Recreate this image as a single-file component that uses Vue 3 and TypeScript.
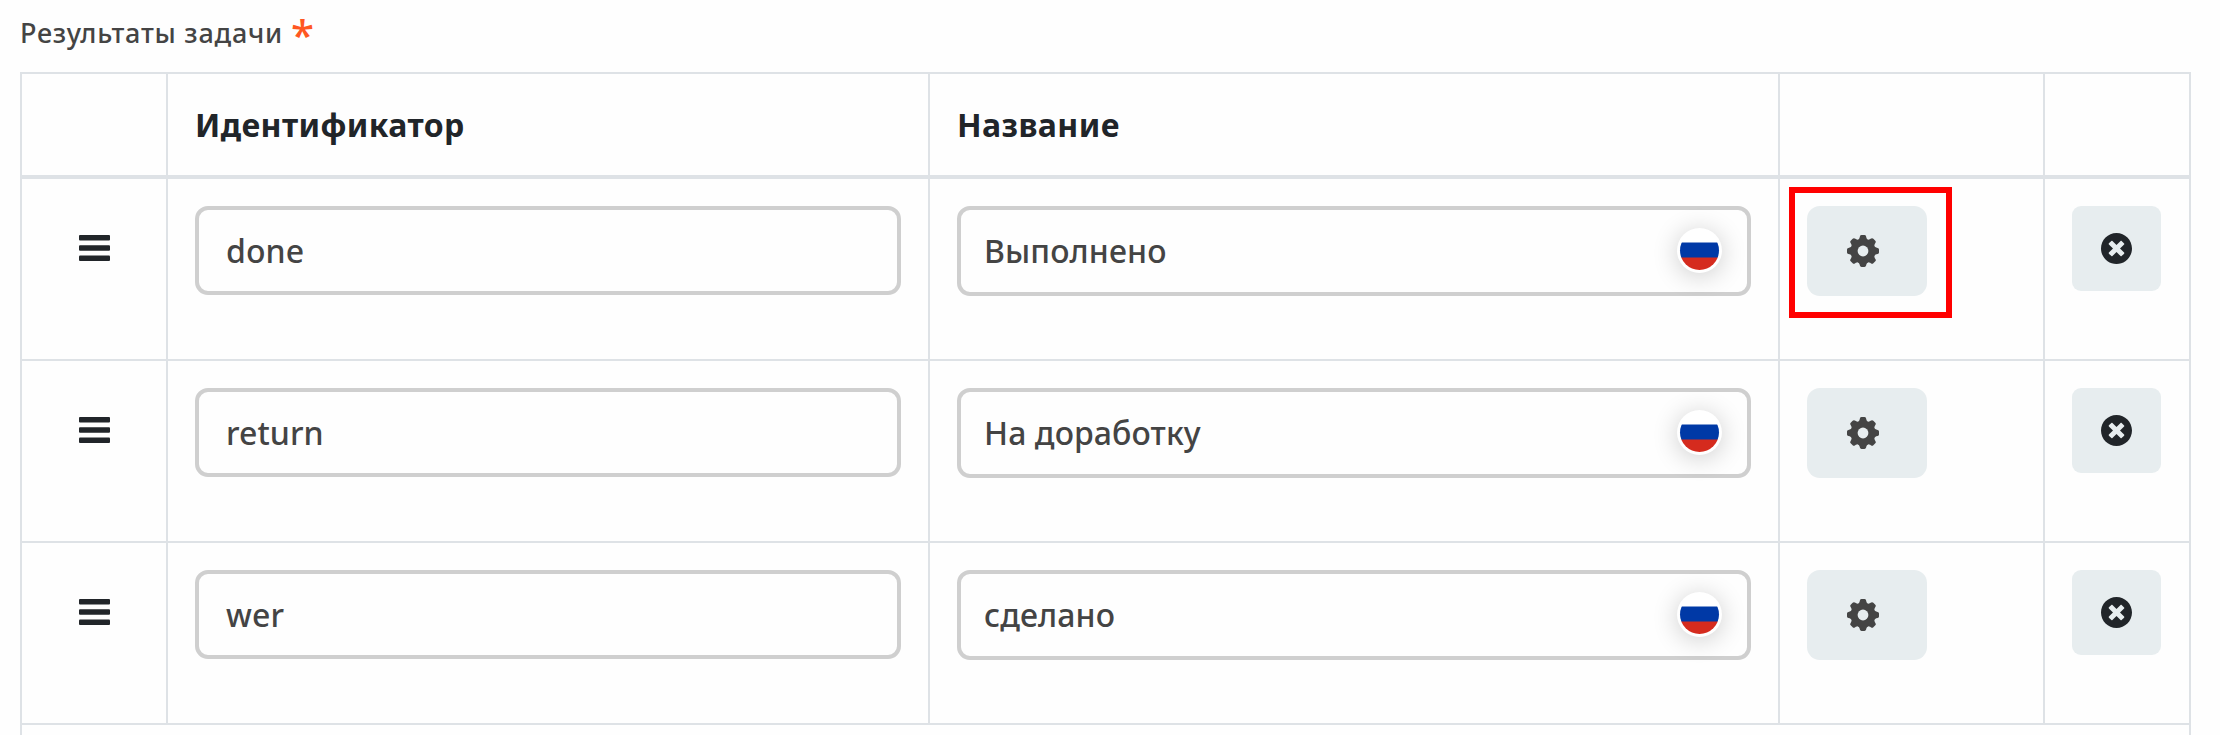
<script setup lang="ts">
interface ResultRow {
  id: string
  title: string
  highlighted: boolean
}

const rows: ResultRow[] = [
  { id: 'done', title: 'Выполнено', highlighted: true },
  { id: 'return', title: 'На доработку', highlighted: false },
  { id: 'wer', title: 'сделано', highlighted: false },
]

const teeth = [0, 45, 90, 135, 180, 225, 270, 315]
</script>

<template>
  <main class="page">
    <div class="label"><span class="label-text">Результаты задачи</span><span class="required">*</span></div>
    <div class="table">
      <div class="row head">
        <div class="cell"></div>
        <div class="cell">Идентификатор</div>
        <div class="cell">Название</div>
        <div class="cell"></div>
        <div class="cell"></div>
      </div>
      <div v-for="row in rows" :key="row.id" class="row">
        <div class="cell handle">
          <svg class="bars" viewBox="0 0 31 26">
            <rect y="0" width="31" height="5.6" rx="1" />
            <rect y="10.2" width="31" height="5.6" rx="1" />
            <rect y="20.5" width="31" height="5.5" rx="1" />
          </svg>
        </div>
        <div class="cell"><div class="field ident"><span class="value">{{ row.id }}</span></div></div>
        <div class="cell">
          <div class="field title">
            <span class="value">{{ row.title }}</span>
            <span class="flag"><span class="stripes"></span></span>
          </div>
        </div>
        <div class="cell settings">
          <button class="btn gear-btn" type="button">
            <svg class="gear" viewBox="-16 -16 32 32">
              <mask id="gear-hole">
                <rect x="-16" y="-16" width="32" height="32" fill="#fff" />
                <circle r="5.4" fill="#000" />
              </mask>
              <g mask="url(#gear-hole)">
                <circle r="12.3" />
                <path
                  v-for="angle in teeth"
                  :key="angle"
                  :transform="`rotate(${angle})`"
                  d="M-6-10C-4.200-11.700-3.400-12.600-3.100-14.600Q-2.800-16-1.400-16H1.400Q2.800-16 3.100-14.600C3.400-12.600 4.200-11.700 6-10Z"
                />
              </g>
            </svg>
          </button>
          <div v-if="row.highlighted" class="highlight"></div>
        </div>
        <div class="cell">
          <button class="btn remove-btn" type="button">
            <svg class="remove" viewBox="8 8 496 496">
              <path d="M256 8C119 8 8 119 8 256s111 248 248 248 248-111 248-248S393 8 256 8zm121.600 313.100c4.700 4.700 4.700 12.300 0 17L338 377.600c-4.700 4.700-12.300 4.700-17 0L256 312l-65.100 65.600c-4.700 4.700-12.300 4.700-17 0L134.400 338c-4.700-4.700-4.700-12.300 0-17l65.600-65-65.600-65.100c-4.700-4.700-4.700-12.300 0-17l39.600-39.600c4.700-4.700 12.300-4.700 17 0l65 65.700 65.100-65.600c4.700-4.700 12.300-4.700 17 0l39.600 39.600c4.700 4.700 4.700 12.300 0 17L312 256l65.600 65.100z" />
            </svg>
          </button>
        </div>
      </div>
      <div class="footer"></div>
    </div>
  </main>
</template>

<style>
body {
  margin: 0;
  background: #fefefe;
}
</style>

<style scoped>
.page {
  box-sizing: border-box;
  width: 2220px;
  height: 735px;
  overflow: hidden;
  padding-left: 20px;
  background: #fefefe;
  color: #212529;
  font-family: 'Noto Sans', 'Open Sans', sans-serif;
}
.label {
  display: flex;
  height: 72px;
  color: #444;
  font-size: 27px;
  font-weight: 500;
  letter-spacing: 0.75px;
  line-height: 66px;
}
.required {
  margin-left: 8px;
  color: #ff5722;
  font-size: 42px;
  line-height: 69px;
}
.table {
  box-sizing: border-box;
  width: 2171px;
  border: 2px solid #dee2e6;
}
.row {
  display: grid;
  grid-template-columns: 144px 762px 850px 265px 146px;
  height: 180px;
  border-bottom: 2px solid #dee2e6;
}
.head {
  height: 101px;
  border-bottom-width: 4px;
  font-size: 32px;
  font-weight: 700;
  letter-spacing: 0.4px;
  line-height: 101px;
}
.cell {
  box-sizing: border-box;
  padding: 27px 27px 0;
  border-left: 2px solid #dee2e6;
}
.cell:first-child {
  border-left: 0;
}
.head .cell {
  padding-top: 0;
}
.handle {
  padding: 56px 0 0 57px;
}
.bars {
  display: block;
  width: 31px;
  height: 26px;
  fill: #212529;
}
.field {
  box-sizing: border-box;
  display: flex;
  align-items: center;
  border: 4px solid #cfcfcf;
  border-radius: 13px;
  color: #444;
  font-size: 32px;
  font-weight: 500;
  letter-spacing: 0.1px;
  white-space: nowrap;
}
.value {
  margin-bottom: 2px;
}
.ident {
  width: 706px;
  height: 89px;
  padding-left: 27px;
}
.ident .value {
  margin-bottom: 1px;
}
.title {
  justify-content: space-between;
  width: 794px;
  height: 90px;
  padding: 0 25px 0 23px;
}
.flag {
  box-sizing: border-box;
  width: 45px;
  height: 45px;
  margin-bottom: 1px;
  padding: 3px;
  border-radius: 50%;
  background: #fff;
  box-shadow: 0 3px 26px rgba(0, 0, 0, 0.2);
}
.stripes {
  display: block;
  height: 39px;
  border-radius: 50%;
  background: linear-gradient(#fff 11px, #0039a6 12px, #0039a6 26px, #d52b1e 27px);
}
.settings {
  position: relative;
}
.btn {
  display: flex;
  align-items: center;
  margin: 0;
  padding: 0;
  border: 0;
  background: #e7edef;
}
.gear-btn {
  width: 120px;
  height: 90px;
  padding-left: 40px;
  border-radius: 13px;
}
.gear {
  width: 32px;
  height: 32px;
  fill: #444;
}
.remove-btn {
  width: 89px;
  height: 85px;
  padding: 0 0 1px 29px;
  border-radius: 9px;
}
.remove {
  width: 31px;
  height: 31px;
  fill: #212529;
}
.highlight {
  position: absolute;
  box-sizing: border-box;
  top: 8px;
  left: 9px;
  width: 163px;
  height: 131px;
  border: 6px solid #f00;
}
.footer {
  height: 40px;
}
</style>
